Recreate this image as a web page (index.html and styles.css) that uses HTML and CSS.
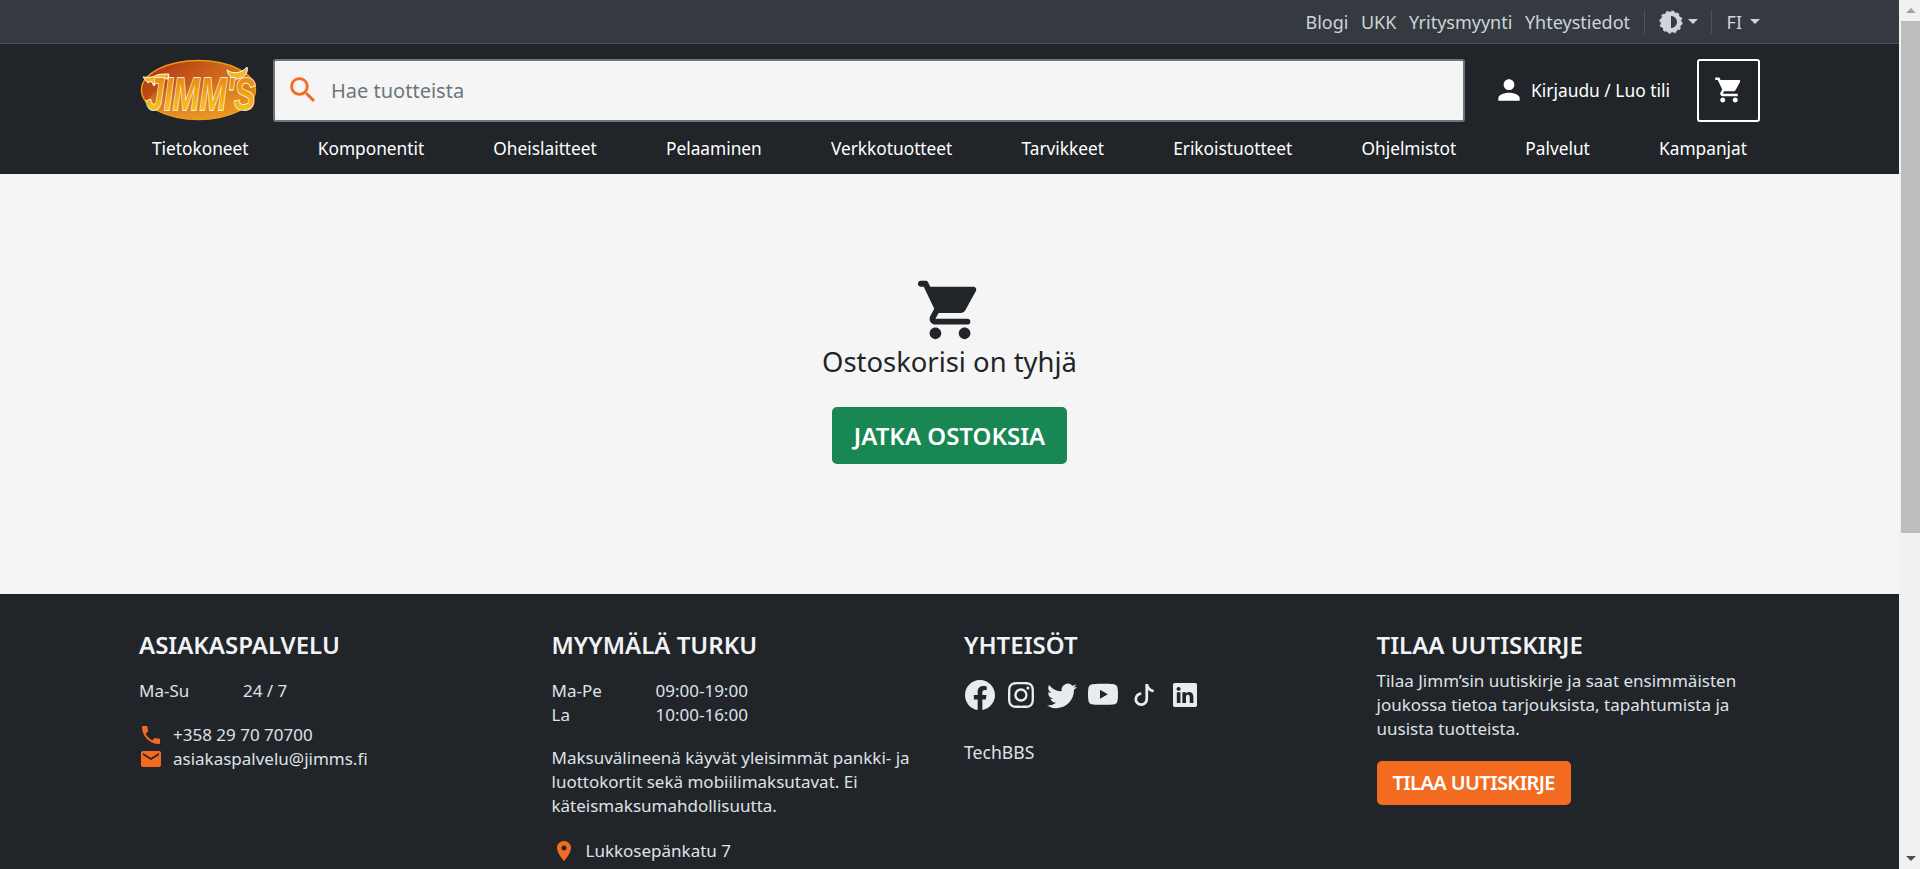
FILE: index.html
```html
<!DOCTYPE html>
<html lang="fi">
<head>
    <meta charset="UTF-8">
    <meta name="viewport" content="width=device-width, initial-scale=1.0">
    <title>Ostoskori - Jimm's</title>
    <link rel="stylesheet" href="styles.css">
</head>
<body>
    <div class="page">
        <div class="topbar">
            <div class="container topbar-inner">
                <a class="top-link" href="#">Blogi</a>
                <a class="top-link" href="#">UKK</a>
                <a class="top-link" href="#">Yritysmyynti</a>
                <a class="top-link" href="#">Yhteystiedot</a>
                <span class="top-sep"></span>
                <a class="top-menu" href="#">
                    <svg class="theme-icon" viewBox="0 0 24 24">
                        <circle cx="12" cy="12" r="10.5"/>
                        <circle class="theme-teeth" cx="12" cy="12" r="10.8"/>
                        <path class="theme-half" d="M12 6v12c3.31 0 6-2.69 6-6s-2.69-6-6-6z"/>
                    </svg>
                    <span class="caret"></span>
                </a>
                <span class="top-sep top-sep-lang"></span>
                <a class="top-menu top-lang" href="#">FI <span class="caret"></span></a>
            </div>
        </div>

        <header class="header">
            <div class="container">
                <div class="header-main">
                    <a class="logo" href="#">
                        <svg viewBox="0 0 120 66" width="120" height="66">
                            <defs>
                                <linearGradient id="logoBg" x1="0" y1="0" x2="1" y2="0.6">
                                    <stop offset="0" stop-color="#ab2a0e"/>
                                    <stop offset="0.5" stop-color="#c9601c"/>
                                    <stop offset="1" stop-color="#e08a12"/>
                                </linearGradient>
                                <linearGradient id="logoGlow" x1="0" y1="0" x2="0" y2="1">
                                    <stop offset="0" stop-color="#f0a030" stop-opacity="0"/>
                                    <stop offset="1" stop-color="#f0a030" stop-opacity="0.7"/>
                                </linearGradient>
                                <linearGradient id="logoText" x1="0" y1="0" x2="0" y2="1">
                                    <stop offset="0" stop-color="#e07f12"/>
                                    <stop offset="0.45" stop-color="#f0a013"/>
                                    <stop offset="1" stop-color="#fbd41f"/>
                                </linearGradient>
                            </defs>
                            <ellipse cx="59.5" cy="33" rx="57" ry="29.5" fill="url(#logoBg)" stroke="#ef9a12" stroke-width="1.5"/>
                            <ellipse cx="59.5" cy="44" rx="50" ry="18" fill="url(#logoGlow)"/>
                            <path d="M4 20c6 1 11 0 14-2 4-1 8-1 12-1l-1 5c-4-1-8 0-11 2l-3 5-3-5-3 2z" fill="#f3b52a" stroke="#fff" stroke-width="1"/>
                            <path d="M88 13c5 4 14 4 20-3 2 6-4 12-11 12-5 0-8-4-9-9z" fill="#f3b52a" stroke="#fff" stroke-width="1"/>
                            <text class="logo-text" transform="translate(7 53) scale(.7 1)">JIMM'S</text>
                        </svg>
                    </a>
                    <form class="search">
                        <svg class="search-icon" viewBox="0 0 24 24"><path d="M15.5 14h-.79l-.28-.27C15.41 12.59 16 11.11 16 9.5 16 5.91 13.09 3 9.5 3S3 5.91 3 9.5 5.91 16 9.5 16c1.61 0 3.09-.59 4.23-1.57l.27.28v.79l5 4.99L20.49 19l-4.99-5zm-6 0C7.01 14 5 11.99 5 9.5S7.01 5 9.5 5 14 7.01 14 9.5 11.99 14 9.5 14z"/></svg>
                        <input class="search-input" type="text" placeholder="Hae tuotteista">
                    </form>
                    <a class="account" href="#">
                        <svg class="account-icon" viewBox="0 0 24 24"><path d="M12 12c2.21 0 4-1.79 4-4s-1.79-4-4-4-4 1.79-4 4 1.79 4 4 4zm0 2c-2.67 0-8 1.34-8 4v2h16v-2c0-2.66-5.33-4-8-4z"/></svg>
                        Kirjaudu / Luo tili
                    </a>
                    <a class="cart-button" href="#">
                        <svg class="cart-icon" viewBox="0 0 24 24"><path d="M7 18c-1.1 0-1.99.9-1.99 2S5.9 22 7 22s2-.9 2-2-.9-2-2-2zM1 2v2h2l3.6 7.59-1.35 2.45c-.16.28-.25.61-.25.96 0 1.1.9 2 2 2h12v-2H7.42c-.14 0-.25-.11-.25-.25l.03-.12.9-1.63h7.45c.75 0 1.41-.41 1.75-1.03l3.58-6.49c.08-.14.12-.31.12-.48 0-.55-.45-1-1-1H5.21l-.94-2H1zm16 16c-1.1 0-1.99.9-1.99 2s.89 2 1.99 2 2-.9 2-2-.9-2-2-2z"/></svg>
                    </a>
                </div>
                <nav class="nav">
                    <a href="#">Tietokoneet</a>
                    <a href="#">Komponentit</a>
                    <a href="#">Oheislaitteet</a>
                    <a href="#">Pelaaminen</a>
                    <a href="#">Verkkotuotteet</a>
                    <a href="#">Tarvikkeet</a>
                    <a href="#">Erikoistuotteet</a>
                    <a href="#">Ohjelmistot</a>
                    <a href="#">Palvelut</a>
                    <a href="#">Kampanjat</a>
                </nav>
            </div>
        </header>

        <main class="empty-cart">
            <svg class="empty-icon" viewBox="0 0 24 24"><path d="M7 18c-1.1 0-1.99.9-1.99 2S5.9 22 7 22s2-.9 2-2-.9-2-2-2zM1 3c0 .55.45 1 1 1h1l3.6 7.59-1.35 2.44C4.52 15.37 5.48 17 7 17h11c.55 0 1-.45 1-1s-.45-1-1-1H7l1.1-2h7.45c.75 0 1.41-.41 1.75-1.03l3.58-6.49c.37-.66-.11-1.48-.87-1.48H5.21l-.67-1.43c-.16-.35-.52-.57-.9-.57H2c-.55 0-1 .45-1 1zm16 15c-1.1 0-1.99.9-1.99 2s.89 2 1.99 2 2-.9 2-2-.9-2-2-2z"/></svg>
            <h1 class="empty-title">Ostoskorisi on tyhjä</h1>
            <a class="btn btn-green" href="#">JATKA OSTOKSIA</a>
        </main>

        <footer class="footer">
            <div class="container footer-grid">
                <section class="footer-col">
                    <h2>ASIAKASPALVELU</h2>
                    <dl class="hours">
                        <dt>Ma-Su</dt><dd>24 / 7</dd>
                    </dl>
                    <ul class="contact">
                        <li>
                            <svg viewBox="0 0 24 24"><path d="M6.62 10.79c1.44 2.83 3.76 5.14 6.59 6.59l2.2-2.2c.27-.27.67-.36 1.02-.24 1.12.37 2.33.57 3.57.57.55 0 1 .45 1 1V20c0 .55-.45 1-1 1-9.39 0-17-7.61-17-17 0-.55.45-1 1-1h3.5c.55 0 1 .45 1 1 0 1.25.2 2.45.57 3.57.11.35.03.74-.25 1.02l-2.2 2.2z"/></svg>
                            +358 29 70 70700
                        </li>
                        <li>
                            <svg viewBox="0 0 24 24"><path d="M20 4H4c-1.1 0-1.99.9-1.99 2L2 18c0 1.1.9 2 2 2h16c1.1 0 2-.9 2-2V6c0-1.1-.9-2-2-2zm0 4l-8 5-8-5V6l8 5 8-5v2z"/></svg>
                            asiakaspalvelu@jimms.fi
                        </li>
                    </ul>
                </section>

                <section class="footer-col">
                    <h2>MYYMÄLÄ TURKU</h2>
                    <dl class="hours">
                        <dt>Ma-Pe</dt><dd>09:00-19:00</dd>
                        <dt>La</dt><dd>10:00-16:00</dd>
                    </dl>
                    <p class="payment">Maksuvälineenä käyvät yleisimmät pankki- ja luottokortit sekä mobiilimaksutavat. Ei käteismaksumahdollisuutta.</p>
                    <div class="address">
                        <svg viewBox="0 0 24 24"><path d="M12 2C8.13 2 5 5.13 5 9c0 5.25 7 13 7 13s7-7.75 7-13c0-3.87-3.13-7-7-7zm0 9.5c-1.38 0-2.5-1.12-2.5-2.5s1.12-2.5 2.5-2.5 2.5 1.12 2.5 2.5-1.12 2.5-2.5 2.5z"/></svg>
                        <div>Lukkosepänkatu 7<br>20100 Turku</div>
                    </div>
                </section>

                <section class="footer-col">
                    <h2>YHTEISÖT</h2>
                    <div class="social">
                        <a class="social-link" href="#"><svg class="ico-30" viewBox="0 0 16 16"><path d="M16 8.049c0-4.446-3.582-8.05-8-8.05C3.58 0-.002 3.603-.002 8.05c0 4.017 2.926 7.347 6.75 7.951v-5.625h-2.03V8.05H6.75V6.275c0-2.017 1.195-3.131 3.022-3.131.876 0 1.791.157 1.791.157v1.98h-1.009c-.993 0-1.303.621-1.303 1.258v1.51h2.218l-.354 2.326H9.25V16c3.824-.604 6.75-3.934 6.75-7.951z"/></svg></a>
                        <a class="social-link" href="#"><svg class="ico-26" viewBox="0 0 16 16"><path d="M8 0C5.829 0 5.556.01 4.703.048 3.85.088 3.269.222 2.76.42a3.917 3.917 0 0 0-1.417.923A3.927 3.927 0 0 0 .42 2.76C.222 3.268.087 3.85.048 4.7.01 5.555 0 5.827 0 8.001c0 2.172.01 2.444.048 3.297.04.852.174 1.433.372 1.942.205.526.478.972.923 1.417.444.445.89.719 1.416.923.51.198 1.09.333 1.942.372C5.555 15.99 5.827 16 8 16s2.444-.01 3.298-.048c.851-.04 1.434-.174 1.943-.372a3.916 3.916 0 0 0 1.416-.923c.445-.445.718-.891.923-1.417.197-.509.332-1.09.372-1.942C15.99 10.445 16 10.173 16 8s-.01-2.445-.048-3.299c-.04-.851-.175-1.433-.372-1.941a3.926 3.926 0 0 0-.923-1.417A3.911 3.911 0 0 0 13.24.42c-.51-.198-1.092-.333-1.943-.372C10.443.01 10.172 0 7.998 0h.003zm-.717 1.442h.718c2.136 0 2.389.007 3.232.046.78.035 1.204.166 1.486.275.373.145.64.319.92.599.28.28.453.546.598.92.11.281.24.705.275 1.485.039.843.047 1.096.047 3.231s-.008 2.389-.047 3.232c-.035.78-.166 1.203-.275 1.485a2.47 2.47 0 0 1-.599.919c-.28.28-.546.453-.92.598-.28.11-.704.24-1.485.276-.843.038-1.096.047-3.232.047s-2.39-.009-3.233-.047c-.78-.036-1.203-.166-1.485-.276a2.478 2.478 0 0 1-.92-.598 2.48 2.48 0 0 1-.6-.92c-.109-.281-.24-.705-.275-1.485-.038-.843-.046-1.096-.046-3.233 0-2.136.008-2.388.046-3.231.036-.78.166-1.204.276-1.486.145-.373.319-.64.599-.92.28-.28.546-.453.92-.598.282-.11.705-.24 1.485-.276.738-.034 1.024-.044 2.515-.045v.002zm4.988 1.328a.96.96 0 1 0 0 1.92.96.96 0 0 0 0-1.92zm-4.27 1.122a4.109 4.109 0 1 0 0 8.217 4.109 4.109 0 0 0 0-8.217zm0 1.441a2.667 2.667 0 1 1 0 5.334 2.667 2.667 0 0 1 0-5.334z"/></svg></a>
                        <a class="social-link" href="#"><svg class="ico-30" viewBox="0 0 16 16"><path d="M5.026 15c6.038 0 9.341-5.003 9.341-9.334 0-.14 0-.282-.006-.422A6.685 6.685 0 0 0 16 3.542a6.658 6.658 0 0 1-1.889.518 3.301 3.301 0 0 0 1.447-1.817 6.533 6.533 0 0 1-2.087.793A3.286 3.286 0 0 0 7.875 6.03a9.325 9.325 0 0 1-6.767-3.429 3.289 3.289 0 0 0 1.018 4.382A3.323 3.323 0 0 1 .64 6.575v.045a3.288 3.288 0 0 0 2.632 3.218 3.203 3.203 0 0 1-.865.115 3.23 3.23 0 0 1-.614-.057 3.283 3.283 0 0 0 3.067 2.277A6.588 6.588 0 0 1 .78 13.58a6.32 6.32 0 0 1-.78-.045A9.344 9.344 0 0 0 5.026 15z"/></svg></a>
                        <a class="social-link" href="#"><svg class="ico-30" viewBox="0 0 16 16"><path d="M8.051 1.999h.089c.822.003 4.987.033 6.11.335a2.01 2.01 0 0 1 1.415 1.42c.101.38.172.883.22 1.402l.01.104.022.26.008.104c.065.914.073 1.77.074 1.957v.075c-.001.194-.01 1.108-.082 2.06l-.008.105-.009.104c-.05.572-.124 1.14-.235 1.558a2.007 2.007 0 0 1-1.415 1.42c-1.16.312-5.569.334-6.18.335h-.142c-.309 0-1.587-.006-2.927-.052l-.17-.006-.087-.004-.171-.007-.171-.007c-1.11-.049-2.167-.128-2.654-.26a2.007 2.007 0 0 1-1.415-1.419c-.111-.417-.185-.986-.235-1.558L.09 9.82l-.008-.104A31.4 31.4 0 0 1 0 7.68v-.123c.002-.215.01-.958.064-1.778l.007-.103.003-.052.008-.104.022-.26.01-.104c.048-.519.119-1.023.22-1.402a2.007 2.007 0 0 1 1.415-1.42c.487-.13 1.544-.21 2.654-.26l.17-.007.172-.006.086-.003.171-.007A99.788 99.788 0 0 1 7.858 2h.193zM6.4 5.209v4.818l4.157-2.408L6.4 5.209z"/></svg></a>
                        <a class="social-link" href="#"><svg class="ico-22" viewBox="0 0 16 16"><path d="M9 0h1.98c.144.715.54 1.617 1.235 2.512C12.895 3.389 13.797 4 15 4v2c-1.753 0-3.07-.814-4-1.829V11a5 5 0 1 1-5-5v2a3 3 0 1 0 3 3V0Z"/></svg></a>
                        <a class="social-link" href="#"><svg class="ico-24" viewBox="0 0 16 16"><path d="M0 1.146C0 .513.526 0 1.175 0h13.65C15.474 0 16 .513 16 1.146v13.708c0 .633-.526 1.146-1.175 1.146H1.175C.526 16 0 15.487 0 14.854V1.146zm4.943 12.248V6.169H2.542v7.225h2.401zm-1.2-8.212c.837 0 1.358-.554 1.358-1.248-.015-.709-.52-1.248-1.342-1.248-.822 0-1.359.54-1.359 1.248 0 .694.521 1.248 1.327 1.248h.016zm4.908 8.212V9.359c0-.216.016-.432.08-.586.173-.431.568-.878 1.232-.878.869 0 1.216.662 1.216 1.634v3.865h2.401V9.25c0-2.22-1.184-3.252-2.764-3.252-1.274 0-1.845.7-2.165 1.193v.025h-.016a5.54 5.54 0 0 1 .016-.025V6.169h-2.4c.03.678 0 7.225 0 7.225h2.4z"/></svg></a>
                    </div>
                    <a class="techbbs" href="#">TechBBS</a>
                </section>

                <section class="footer-col">
                    <h2 class="tight">TILAA UUTISKIRJE</h2>
                    <p class="news-text">Tilaa Jimm’sin uutiskirje ja saat ensimmäisten joukossa tietoa tarjouksista, tapahtumista ja uusista tuotteista.</p>
                    <a class="btn btn-orange" href="#">TILAA UUTISKIRJE</a>
                </section>
            </div>
        </footer>
    </div>

    <!-- page scrollbar as it shows in the reference -->
    <div class="scrollbar">
        <span class="scroll-arrow scroll-up"></span>
        <span class="scroll-track"><span class="scroll-thumb"></span></span>
        <span class="scroll-arrow scroll-down"></span>
    </div>
</body>
</html>
```

FILE: styles.css
```css
* {
    box-sizing: border-box;
}
html, body {
    height: 100%;
    margin: 0;
    overflow: hidden;
}
body {
    display: flex;
    font-family: "Noto Sans", "Open Sans", Arial, sans-serif;
    font-size: 16px;
    line-height: 24px;
    background-color: #f5f5f5;
    color: #212529;
}
a {
    color: inherit;
    text-decoration: none;
}
svg {
    display: block;
    fill: currentColor;
}
.page {
    flex: 1;
    min-width: 0;
    height: 100%;
    overflow: hidden;
}
.container {
    width: 1645px;
    margin: 0 auto;
    padding: 0 12px;
}

/* top bar */
.topbar {
    height: 44px;
    background-color: #343a40;
    border-bottom: 1px solid #4d5359;
    color: #ced4da;
    font-size: 18px;
}
.topbar-inner {
    display: flex;
    justify-content: flex-end;
    align-items: center;
    height: 43px;
}
.top-link {
    margin-left: 12.5px;
}
.top-sep {
    width: 1px;
    height: 24px;
    margin-left: 14px;
    background-color: #4d5359;
}
.top-sep-lang {
    margin-left: 12.5px;
}
.top-menu {
    display: flex;
    align-items: center;
    margin-left: 14px;
}
.top-lang {
    margin-left: 15px;
    gap: 8px;
}
.theme-icon {
    width: 24px;
    height: 24px;
}
.theme-teeth {
    fill: none;
    stroke: currentColor;
    stroke-width: 1.6;
    stroke-dasharray: 2.83;
}
.theme-half {
    fill: #343a40;
}
.caret {
    width: 0;
    height: 0;
    margin-left: 5px;
    border-top: 5px solid currentColor;
    border-left: 5px solid transparent;
    border-right: 5px solid transparent;
}
.top-lang .caret {
    margin-left: 0;
}

/* header */
.header {
    height: 130px;
    background-color: #212529;
    color: #fff;
}
.header-main {
    display: flex;
    align-items: center;
    padding-top: 13px;
    font-size: 17.4px;
}
.logo {
    flex: none;
    width: 134px;
}
.logo-text {
    font-family: "Liberation Sans", Arial, sans-serif;
    font-size: 46px;
    font-weight: bold;
    font-style: italic;
    fill: url(#logoText);
    stroke: #fff;
    stroke-width: 1.6px;
    paint-order: stroke;
}
.search {
    flex: 1;
    display: flex;
    align-items: center;
    height: 63px;
    padding-left: 11px;
    background-color: #f5f5f5;
    border: 2px solid #6c757d;
    border-radius: 3px;
    color: #f36a21;
}
.search-icon {
    flex: none;
    width: 34px;
    height: 34px;
}
.search-input {
    flex: 1;
    margin-left: 9px;
    border: none;
    outline: none;
    background: none;
    font-family: inherit;
    font-size: 20px;
    color: #212529;
}
.search-input::placeholder {
    color: #6c757d;
}
.account {
    display: flex;
    align-items: center;
    margin-left: 28px;
}
.account-icon {
    width: 32px;
    height: 32px;
    margin-right: 6px;
}
.cart-button {
    display: flex;
    justify-content: center;
    align-items: center;
    width: 63px;
    height: 63px;
    margin-left: 27px;
    border: 2px solid #fff;
    border-radius: 3px;
}
.cart-icon {
    width: 30px;
    height: 30px;
}
.nav {
    display: flex;
    justify-content: space-between;
    padding: 14px 13px 0;
    font-size: 17.3px;
}

/* empty cart */
.empty-cart {
    display: flex;
    flex-direction: column;
    align-items: center;
    height: 420px;
    padding-top: 101px;
}
.empty-icon {
    width: 70px;
    height: 70px;
    margin-bottom: -1px;
}
.empty-title {
    margin: 0 0 27px;
    font-size: 27.4px;
    font-weight: 400;
    line-height: 36px;
}
.btn {
    display: inline-block;
    border-radius: 5px;
    color: #fff;
    font-weight: 600;
    text-align: center;
}
.btn-green {
    padding: 10.5px 22px;
    background-color: #198754;
    font-size: 24px;
    line-height: 36px;
}
.btn-orange {
    padding: 8px 16px;
    background-color: #f36a21;
    font-size: 20px;
    line-height: 28px;
    letter-spacing: -0.6px;
}

/* footer */
.footer {
    height: 500px;
    background-color: #212529;
    color: #dee2e6;
    font-size: 17px;
}
.footer-grid {
    display: grid;
    grid-template-columns: repeat(4, 412.5px);
    padding: 33px 0 0;
}
.footer-col {
    padding: 0 12px;
}
.footer-col h2 {
    margin: 0 0 16px;
    font-size: 24px;
    font-weight: 600;
    line-height: 36px;
    color: #f1f3f5;
}
.footer-col h2.tight {
    margin-bottom: 6px;
}
.hours {
    display: grid;
    grid-template-columns: 104px 1fr;
    margin: 0;
}
.hours dd {
    margin: 0;
}
.contact {
    margin: 20px 0 0;
    padding: 0;
    list-style: none;
}
.contact li {
    display: flex;
    align-items: center;
}
.contact svg, .address svg {
    flex: none;
    width: 24px;
    height: 24px;
    margin-right: 10px;
    fill: #f36a21;
}
.payment {
    margin: 19px 0 21px;
}
.address {
    display: flex;
}
.social {
    display: flex;
    align-items: center;
    height: 36px;
    margin: -2px 0 0 -5px;
}
.social-link {
    display: flex;
    justify-content: center;
    flex: none;
    width: 41px;
    color: #e9ecef;
}
.ico-30 {
    width: 30px;
    height: 30px;
}
.ico-26 {
    width: 26px;
    height: 26px;
}
.ico-24 {
    width: 24px;
    height: 24px;
}
.ico-22 {
    width: 22px;
    height: 22px;
}
.techbbs {
    display: block;
    margin-top: 27px;
    font-size: 17.6px;
}
.news-text {
    margin: 0 0 20px;
}

/* scrollbar */
.scrollbar {
    flex: none;
    display: flex;
    flex-direction: column;
    width: 21px;
    height: 100%;
    padding-left: 2px;
    background-color: #f1f1f1;
}
.scroll-arrow {
    flex: none;
    display: flex;
    justify-content: center;
    align-items: center;
    height: 21px;
}
.scroll-arrow::before {
    content: "";
    border-left: 5px solid transparent;
    border-right: 5px solid transparent;
}
.scroll-up::before {
    border-bottom: 5px solid #a3a3a3;
}
.scroll-down::before {
    border-top: 5px solid #505050;
}
.scroll-track {
    flex: 1;
}
.scroll-thumb {
    display: block;
    height: 512px;
    background-color: #bdbdbd;
}
```
